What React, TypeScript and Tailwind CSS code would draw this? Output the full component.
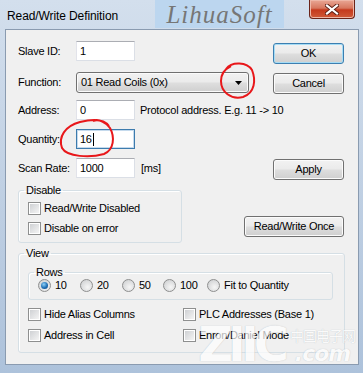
import React from 'react';

const ui = "font-['Liberation_Sans',Arial,sans-serif] text-[11px] tracking-[-0.25px] text-black";

function TextBox({ value, focused, caret }: { value: string; focused?: boolean; caret?: boolean }) {
  return (
    <div
      className={
        focused
          ? 'flex h-[20px] w-[59px] items-center border border-[#3d7bad] bg-white pl-[3px] shadow-[inset_0_0_0_1px_#c5daed]'
          : 'flex h-[20px] w-[59px] items-center border border-[#dbdfe6] border-t-[#abadb3] border-l-[#e2e3ea] bg-white pl-[3px]'
      }
    >
      <span>{value}</span>
      {caret && <span className="ml-[1px] h-[13px] w-[1px] bg-black" />}
    </div>
  );
}

function Button({ label, w, mt, primary }: { label: string; w: string; mt: string; primary?: boolean }) {
  return (
    <div
      className={`${w} ${mt} flex h-[21px] items-center justify-center rounded-[3px] border bg-[linear-gradient(#f2f2f2_0%,#ebebeb_45%,#dddddd_55%,#cfcfcf_100%)] ${
        primary ? 'border-[#3c7fb1] shadow-[inset_0_0_0_1px_#a6dcf5]' : 'border-[#707070] shadow-[inset_0_0_0_1px_#fbfbfb]'
      }`}
    >
      {label}
    </div>
  );
}

function Check({ label }: { label: string }) {
  return (
    <div className="flex h-[13px] items-center">
      <span className="h-[13px] w-[13px] border border-[#8e8f8f] bg-white p-[1px]">
        <span className="block h-full w-full bg-[linear-gradient(135deg,#cfd1d4,#f4f4f4)]" />
      </span>
      <span className="ml-[3px]">{label}</span>
    </div>
  );
}

function Radio({ label, w, checked }: { label: string; w: string; checked?: boolean }) {
  return (
    <div className={`${w} flex h-[13px] items-center`}>
      <span className="flex h-[13px] w-[13px] items-center justify-center rounded-full border border-[#8e8f8f] bg-[radial-gradient(circle_at_60%_65%,#f6f6f6,#c9cbcd)]">
        {checked && (
          <span className="h-[7px] w-[7px] rounded-full bg-[radial-gradient(circle_at_40%_35%,#8fd1f7,#1f6fb5_55%,#0c3f75)]" />
        )}
      </span>
      <span className="ml-[4px]">{label}</span>
    </div>
  );
}

export default function App() {
  return (
    <div className={`relative h-[373px] w-[363px] overflow-hidden bg-[linear-gradient(#d3dfed,#c4d3e5_40%,#adc2db)] ${ui}`}>
      {/* title bar */}
      <div className="flex h-[29px] items-start">
        <div className="w-[155px] pl-[7px] pt-[7px] text-[12px] tracking-[-0.1px] font-['Liberation_Sans',Arial,sans-serif]">
          Read/Write Definition
        </div>
        <div className="flex h-[28px] w-[129px] items-center justify-center bg-[#bcd6ef]">
          <span className="font-['Liberation_Serif',serif] text-[25px] italic leading-none tracking-[1px] text-[#767676]">
            LihuaSoft
          </span>
        </div>
        <div className="ml-auto mr-[8px] flex h-[19px] w-[46px] items-center justify-center rounded-b-[4px] border border-t-0 border-[#6b2419] bg-[linear-gradient(#e9a795,#d7775f_45%,#c5391d_55%,#cf5a38)] shadow-[inset_0_0_0_1px_#eeb7a8]">
          <svg width="14" height="11" viewBox="0 0 14 11">
            <path d="M2 1.5 L12 9.5 M12 1.5 L2 9.5" stroke="#5a1e14" strokeWidth="4" strokeLinecap="square" />
            <path d="M2 1.5 L12 9.5 M12 1.5 L2 9.5" stroke="#ffffff" strokeWidth="2.2" strokeLinecap="square" />
          </svg>
        </div>
      </div>

      {/* client area */}
      <div className="ml-[5px] h-[336px] w-[354px] border border-[#8a9bb0] bg-[#f0f0f0] pl-[12px] pr-[14px] pt-[11px]">
        <div className="flex h-[20px] items-start">
          <div className="w-[58px] leading-[20px]">Slave ID:</div>
          <TextBox value="1" />
          <div className="ml-auto">
            <Button label="OK" w="w-[71px]" mt="mt-[2px]" primary />
          </div>
        </div>

        <div className="mt-[11px] flex h-[21px] items-start">
          <div className="w-[58px] leading-[21px]">Function:</div>
          <div className="flex h-[21px] w-[173px] items-center rounded-[3px] border border-[#707070] bg-[linear-gradient(#f2f2f2_0%,#ebebeb_45%,#dddddd_55%,#cfcfcf_100%)] pl-[4px] pr-[6px] shadow-[inset_0_0_0_1px_#fbfbfb]">
            <span>01 Read Coils (0x)</span>
            <svg className="ml-auto" width="7" height="4" viewBox="0 0 7 4">
              <path d="M0 0 H7 L3.5 4 Z" fill="#000" />
            </svg>
          </div>
          <div className="ml-auto">
            <Button label="Cancel" w="w-[71px]" mt="mt-[1px]" />
          </div>
        </div>

        <div className="mt-[7px] flex h-[20px] items-center">
          <div className="w-[58px]">Address:</div>
          <TextBox value="0" />
          <div className="ml-[5px]">Protocol address. E.g. 11 -&gt; 10</div>
        </div>

        <div className="mt-[9px] flex h-[20px] items-center">
          <div className="w-[58px]">Quantity:</div>
          <TextBox value="16" focused caret />
        </div>

        <div className="mt-[9px] flex h-[20px] items-start">
          <div className="w-[58px] leading-[20px]">Scan Rate:</div>
          <TextBox value="1000" />
          <div className="ml-[6px] leading-[20px]">[ms]</div>
          <div className="ml-auto">
            <Button label="Apply" w="w-[71px]" mt="mt-[1px]" />
          </div>
        </div>

        <div className="mt-[6px] flex items-start">
          <fieldset className="h-[59px] w-[164px] rounded-[3px] border border-[#d5dfe5] pl-[9px] pt-[5px] shadow-[inset_1px_1px_0_#ffffff]">
            <legend className="ml-[-4px] px-[2px] leading-[13px]">Disable</legend>
            <Check label="Read/Write Disabled" />
            <div className="mt-[7px]">
              <Check label="Disable on error" />
            </div>
          </fieldset>
          <div className="ml-auto">
            <Button label="Read/Write Once" w="w-[100px]" mt="mt-[32px]" />
          </div>
        </div>

        <fieldset className="mt-[4px] h-[106px] w-[327px] rounded-[3px] border border-[#d5dfe5] pl-[9px] shadow-[inset_1px_1px_0_#ffffff]">
          <legend className="ml-[-4px] px-[2px] leading-[13px]">View</legend>
          <fieldset className="mt-[6px] h-[34px] w-[305px] rounded-[3px] border border-[#d5dfe5] pl-[9px] shadow-[inset_1px_1px_0_#ffffff]">
            <legend className="ml-[-4px] px-[2px] leading-[13px]">Rows</legend>
            <div className="flex">
              <Radio label="10" w="w-[42px]" checked />
              <Radio label="20" w="w-[42px]" />
              <Radio label="50" w="w-[41px]" />
              <Radio label="100" w="w-[44px]" />
              <Radio label="Fit to Quantity" w="w-[100px]" />
            </div>
          </fieldset>
          <div className="mt-[8px] grid grid-cols-[155px_1fr] gap-y-[8px]">
            <Check label="Hide Alias Columns" />
            <Check label="PLC Addresses (Base 1)" />
            <Check label="Address in Cell" />
            <Check label="Enron/Daniel Mode" />
          </div>
        </fieldset>
      </div>

      {/* site watermark */}
      <div className="pointer-events-none absolute bottom-[8px] right-[8px] flex items-end text-white opacity-70 [text-shadow:0_0_1px_#9aa4ad]">
        <span className="font-['DejaVu_Sans',sans-serif] text-[48px] font-bold leading-[42px] tracking-[-5px]">ZIIC</span>
        <div className="ml-[6px] flex flex-col items-center">
          <span className="font-['Noto_Sans_CJK_SC',sans-serif] text-[14px] leading-[16px] tracking-[-1px]">中国电子网</span>
          <span className="font-['DejaVu_Sans',sans-serif] text-[22px] font-bold italic leading-[22px] tracking-[-1px]">.com</span>
        </div>
      </div>

      {/* red pen marks */}
      <svg className="pointer-events-none absolute left-0 top-0" width="363" height="373" viewBox="0 0 363 373">
        <path
          d="M226 69 C232 61 247 62 252 70 C256 80 255 93 243 97 C231 100 221 92 221 81 C221 73 225 69 231 66"
          stroke="#e8171a"
          strokeWidth="2"
          fill="none"
        />
        <path
          d="M109 126 C104 119 92 119 80 122 C65 126 58 137 62 148 C67 157 90 158 104 154 C114 150 115 137 110 128 C106 122 99 119 93 121"
          stroke="#e8171a"
          strokeWidth="2"
          fill="none"
        />
      </svg>
    </div>
  );
}
